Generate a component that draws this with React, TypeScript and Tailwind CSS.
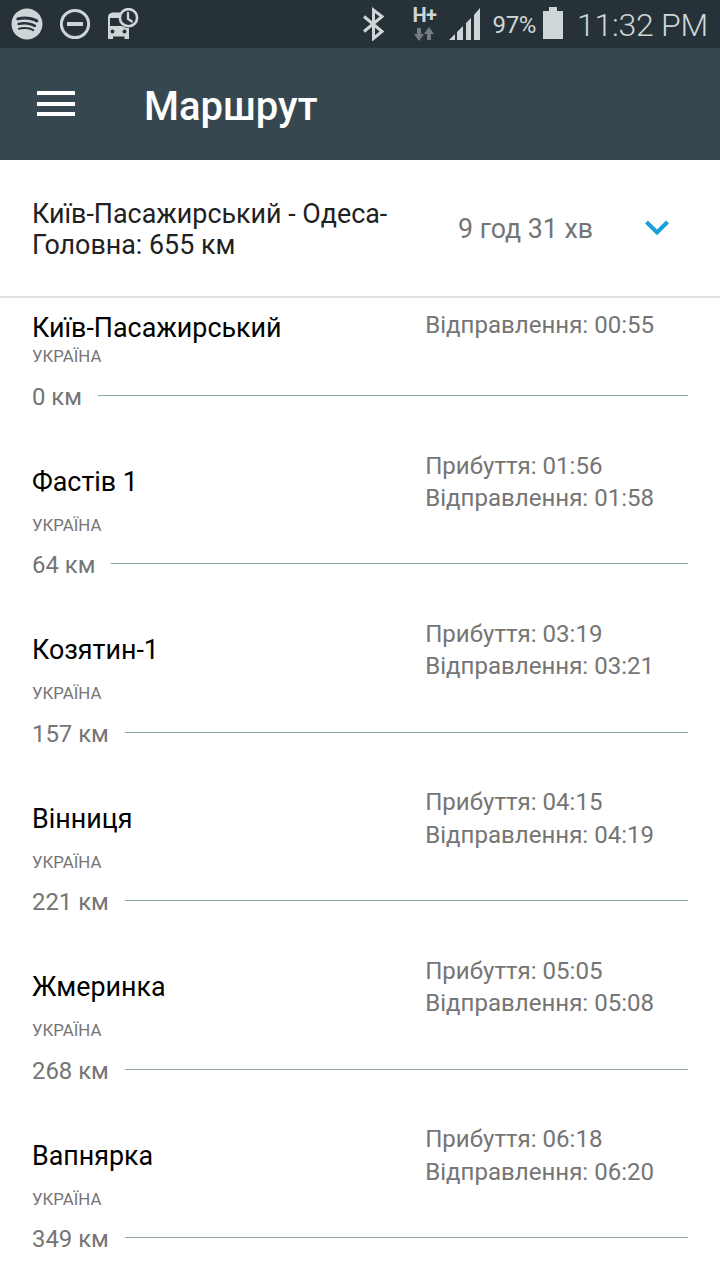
import { FaSpotify } from 'react-icons/fa';

interface Stop {
  name: string;
  country: string;
  distance: string;
  arrival?: string;
  departure: string;
}

const STOPS: Stop[] = [
  { name: 'Київ-Пасажирський', country: 'УКРАЇНА', distance: '0 км', departure: '00:55' },
  { name: 'Фастів 1', country: 'УКРАЇНА', distance: '64 км', arrival: '01:56', departure: '01:58' },
  { name: 'Козятин-1', country: 'УКРАЇНА', distance: '157 км', arrival: '03:19', departure: '03:21' },
  { name: 'Вінниця', country: 'УКРАЇНА', distance: '221 км', arrival: '04:15', departure: '04:19' },
  { name: 'Жмеринка', country: 'УКРАЇНА', distance: '268 км', arrival: '05:05', departure: '05:08' },
  { name: 'Вапнярка', country: 'УКРАЇНА', distance: '349 км', arrival: '06:18', departure: '06:20' },
];

function StatusBar() {
  return (
    <div className="h-12 bg-[#263238] text-[#cfd6d8] flex items-center justify-between pl-[11px] pr-3 shrink-0">
      <div className="flex items-center gap-4">
        <FaSpotify className="w-8 h-8" />
        <svg className="w-8 h-8" viewBox="0 0 32 32" fill="none" stroke="currentColor">
          <circle cx="16" cy="16" r="13.6" strokeWidth="3" />
          <path d="M8 16h16" strokeWidth="4" />
        </svg>
        {/* Bus with a clock */}
        <svg className="w-8 h-8" viewBox="0 0 32 32">
          <path
            fill="currentColor"
            fillRule="evenodd"
            d="M1 9q0-4 5-4.500h9v5.500H3v8h12l4 2h3v11h-4.500v-2.500H6v2.500H1zM5.500 21.500a2 2 0 1 0 .01 0zM17.500 21.500a2 2 0 1 0 .01 0z"
          />
          <circle cx="21.500" cy="9.700" r="8.600" fill="#263238" stroke="currentColor" strokeWidth="2.600" />
          <path d="M21 4v7l4.500 3" fill="none" stroke="currentColor" strokeWidth="2.200" />
        </svg>
      </div>

      <div className="flex items-center">
        <svg className="w-[24px] h-[34px] mr-[25px]" viewBox="0 0 24 34" fill="none" stroke="currentColor" strokeWidth="3">
          <path d="M2 9.500L20 24.500L11.500 31.500V3L20 9.500L2 24.500" />
        </svg>
        <div className="flex flex-col items-center w-[26px] h-9 mr-3">
          <span className="font-bold text-[20px] leading-[19px] tracking-[-0.5px]">H+</span>
          <svg className="w-5 h-[15px] mt-[2px]" viewBox="0 0 20 15" fill="#737d81">
            <path d="M3 1h4v6h3l-5 7l-5-7h3z" />
            <path d="M13 13h4V7h3l-5-7l-5 7h3z" />
          </svg>
        </div>
        <svg className="w-8 h-8 mr-[11px]" viewBox="0 0 32 32" fill="currentColor">
          <path d="M0 32l6-6v6zM8 24l6-6v14H8zM17 15l5-5v22h-5zM25 7l6-7v32h-6z" />
        </svg>
        <span className="text-[24px] leading-8 tracking-[-0.3px] mt-px">97%</span>
        <svg className="w-5 h-8 ml-[7px] mr-[14px] mb-[2px]" viewBox="0 0 20 32" fill="currentColor">
          <path d="M6 0h8v4h6v28H0V4h6z" />
        </svg>
        <span className="text-[32px] leading-8 font-light tracking-[-0.250px] mt-[2px]">11:32 PM</span>
      </div>
    </div>
  );
}

function StopRow({ stop, first }: { stop: Stop; first: boolean }) {
  return (
    <div className={first ? 'h-[114.400px] shrink-0 px-8' : 'h-[168.400px] shrink-0 px-8'}>
      <div className="flex">
        <div className={first ? 'w-[393.200px] pt-[13.400px]' : 'w-[393.200px] pt-[53px]'}>
          <h3 className="text-[26.850px] leading-8 text-black">{stop.name}</h3>
          <p className={first ? 'mt-[2.200px] text-[16.800px] leading-5' : 'mt-[17.100px] text-[16.800px] leading-5'}>
            {stop.country}
          </p>
        </div>
        <div className={first ? 'pt-[10.200px] text-[24.050px] leading-[32.400px]' : 'pt-[36.600px] text-[24.050px] leading-[32.400px]'}>
          {stop.arrival && <p>Прибуття: {stop.arrival}</p>}
          <p>Відправлення: {stop.departure}</p>
        </div>
      </div>
      <div className={first ? 'mt-[14.800px] flex items-center' : 'mt-[14.300px] flex items-center'}>
        <span className="text-[23.900px] leading-8">{stop.distance}</span>
        <span className="flex-1 h-px ml-4 mb-[3px] bg-[#90a4ae]" />
      </div>
    </div>
  );
}

export default function App() {
  return (
    <div className="w-[720px] h-[1280px] overflow-hidden flex flex-col bg-white text-[#757575] font-[Roboto,sans-serif]">
      <StatusBar />

      {/* App bar */}
      <header className="h-28 shrink-0 bg-[#37474f] text-white flex items-center pl-[37px]">
        <div className="w-[38px] flex flex-col gap-[6.500px] mb-px">
          <span className="h-1 bg-white" />
          <span className="h-1 bg-white" />
          <span className="h-1 bg-white" />
        </div>
        <h1 className="ml-[69px] mt-[5px] text-[40px] leading-[48px] font-medium">Маршрут</h1>
      </header>

      {/* Route summary */}
      <section className="h-[138px] shrink-0 border-b-2 border-[#e2e2e2] flex items-center pl-8 pr-[51px]">
        <h2 className="w-[370px] mt-[3px] text-[26.850px] leading-[31px] text-[#212121]">
          Київ-Пасажирський - Одеса-
          <br />
          Головна: 655 км
        </h2>
        <span className="ml-14 mt-[2px] text-[26.750px] leading-8">9 год 31 хв</span>
        <svg className="w-6 h-4 ml-auto" viewBox="0 0 24 16" fill="none" stroke="#1a9fdc" strokeWidth="4">
          <path d="M1.500 2L12 12.500L22.500 2" />
        </svg>
      </section>

      <main className="flex-1 flex flex-col pt-[0.600px]">
        {STOPS.map((stop, idx) => (
          <StopRow key={stop.name} stop={stop} first={idx === 0} />
        ))}
      </main>
    </div>
  );
}
